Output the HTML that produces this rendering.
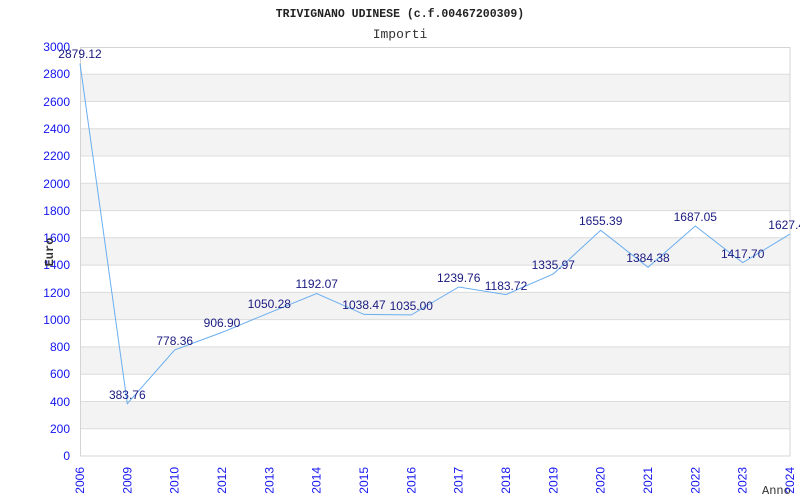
<!DOCTYPE html>
<html><head><meta charset="utf-8"><style>
html,body{margin:0;padding:0;background:#fff;width:800px;height:500px;overflow:hidden}
svg{display:block}
.yl{font-family:"Liberation Sans",sans-serif;font-size:12px;fill:#1414f0;text-anchor:end}
.xl{font-family:"Liberation Sans",sans-serif;font-size:12px;fill:#1414f0;text-anchor:end}
.vl{font-family:"Liberation Sans",sans-serif;font-size:12px;fill:#1a1a80;text-anchor:middle}
</style></head><body>
<svg width="800" height="500" viewBox="0 0 800 500">
<text x="400" y="17" font-family="Liberation Mono,monospace" font-size="11.5" font-weight="bold" fill="#222" text-anchor="middle">TRIVIGNANO UDINESE (c.f.00467200309)</text>
<text x="400" y="38" font-family="Liberation Mono,monospace" font-size="13" fill="#333" text-anchor="middle">Importi</text>
<g fill="#f3f3f3">
<rect x="80" y="401.5" width="710" height="27.2"/>
<rect x="80" y="346.9" width="710" height="27.3"/>
<rect x="80" y="292.4" width="710" height="27.2"/>
<rect x="80" y="237.8" width="710" height="27.3"/>
<rect x="80" y="183.3" width="710" height="27.3"/>
<rect x="80" y="128.7" width="710" height="27.3"/>
<rect x="80" y="74.2" width="710" height="27.3"/>
</g>
<g stroke="#dcdcdc" stroke-width="1">
<line x1="80" x2="790" y1="428.7" y2="428.7"/><line x1="80" x2="790" y1="401.5" y2="401.5"/>
<line x1="80" x2="790" y1="374.2" y2="374.2"/><line x1="80" x2="790" y1="346.9" y2="346.9"/>
<line x1="80" x2="790" y1="319.6" y2="319.6"/><line x1="80" x2="790" y1="292.4" y2="292.4"/>
<line x1="80" x2="790" y1="265.1" y2="265.1"/><line x1="80" x2="790" y1="237.8" y2="237.8"/>
<line x1="80" x2="790" y1="210.6" y2="210.6"/><line x1="80" x2="790" y1="183.3" y2="183.3"/>
<line x1="80" x2="790" y1="156" y2="156"/><line x1="80" x2="790" y1="128.7" y2="128.7"/>
<line x1="80" x2="790" y1="101.5" y2="101.5"/><line x1="80" x2="790" y1="74.2" y2="74.2"/>
</g>
<rect x="80.5" y="47.5" width="709.5" height="408.5" fill="none" stroke="#d4d4d4"/>
<g class="yl">
<text x="70" y="460">0</text><text x="70" y="433">200</text><text x="70" y="406">400</text>
<text x="70" y="378">600</text><text x="70" y="351">800</text><text x="70" y="324">1000</text>
<text x="70" y="297">1200</text><text x="70" y="269">1400</text><text x="70" y="242">1600</text>
<text x="70" y="215">1800</text><text x="70" y="188">2000</text><text x="70" y="160">2200</text>
<text x="70" y="133">2400</text><text x="70" y="106">2600</text><text x="70" y="78">2800</text>
<text x="70" y="51">3000</text>
</g>
<text transform="translate(53,252) rotate(-90)" font-family="Liberation Mono,monospace" font-size="12" font-weight="bold" fill="#333" text-anchor="middle">Euro</text>
<text x="762" y="494" font-family="Liberation Mono,monospace" font-size="12" fill="#333">Anno</text>
<g class="xl">
<text transform="translate(84,467) rotate(-90)">2006</text>
<text transform="translate(131.3,467) rotate(-90)">2009</text>
<text transform="translate(178.7,467) rotate(-90)">2010</text>
<text transform="translate(226,467) rotate(-90)">2012</text>
<text transform="translate(273.3,467) rotate(-90)">2013</text>
<text transform="translate(320.7,467) rotate(-90)">2014</text>
<text transform="translate(368,467) rotate(-90)">2015</text>
<text transform="translate(415.3,467) rotate(-90)">2016</text>
<text transform="translate(462.7,467) rotate(-90)">2017</text>
<text transform="translate(510,467) rotate(-90)">2018</text>
<text transform="translate(557.3,467) rotate(-90)">2019</text>
<text transform="translate(604.7,467) rotate(-90)">2020</text>
<text transform="translate(652,467) rotate(-90)">2021</text>
<text transform="translate(699.3,467) rotate(-90)">2022</text>
<text transform="translate(746.7,467) rotate(-90)">2023</text>
<text transform="translate(794,467) rotate(-90)">2024</text>
</g>
<polyline fill="none" stroke="#6aaef0" stroke-width="1" points="80,63.5 127.3,403.7 174.7,349.9 222,332.4 269.3,312.8 316.7,293.5 364,314.4 411.3,314.9 458.7,287 506,294.6 553.3,273.9 600.7,230.3 648,267.3 695.3,226 742.7,262.7 790,234.1"/>
<g class="vl">
<text x="80" y="58">2879.12</text>
<text x="127.3" y="399">383.76</text>
<text x="174.7" y="345">778.36</text>
<text x="222" y="327">906.90</text>
<text x="269.3" y="308">1050.28</text>
<text x="316.7" y="288">1192.07</text>
<text x="364" y="309">1038.47</text>
<text x="411.3" y="310">1035.00</text>
<text x="458.7" y="282">1239.76</text>
<text x="506" y="290">1183.72</text>
<text x="553.3" y="269">1335.97</text>
<text x="600.7" y="225">1655.39</text>
<text x="648" y="262">1384.38</text>
<text x="695.3" y="221">1687.05</text>
<text x="742.7" y="258">1417.70</text>
<text x="790" y="229">1627.40</text>
</g>
</svg>
</body></html>
